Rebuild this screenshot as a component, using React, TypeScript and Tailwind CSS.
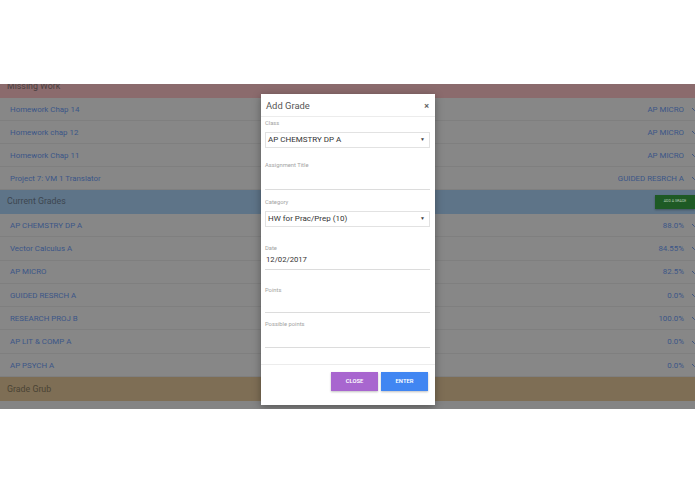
import React from "react";

const font = { fontFamily: "Roboto, 'Liberation Sans', sans-serif" };

const missing = [
  ["Homework Chap 14", "AP MICRO"],
  ["Homework chap 12", "AP MICRO"],
  ["Homework Chap 11", "AP MICRO"],
  ["Project 7: VM 1 Translator", "GUIDED RESRCH A"],
];

const grades = [
  ["AP CHEMSTRY DP A", "88.0%"],
  ["Vector Calculus A", "84.55%"],
  ["AP MICRO", "82.5%"],
  ["GUIDED RESRCH A", "0.0%"],
  ["RESEARCH PROJ B", "100.0%"],
  ["AP LIT & COMP A", "0.0%"],
  ["AP PSYCH A", "0.0%"],
];

function Chevron() {
  return (
    <svg width="7" height="5" viewBox="0 0 7 5" className="-mr-[3px] shrink-0">
      <path d="M1 1l2.5 2.5L6 1" fill="none" stroke="#3f5680" strokeWidth="1" />
    </svg>
  );
}

function Row({ left, right, h }: { left: string; right: string; h: string }) {
  return (
    <div className={`flex items-center justify-between border-b border-[#7f7f7f] bg-[#878787] pl-[10px] pr-0 ${h}`}>
      <span className="pt-[1px] text-[7.9px] text-[#3b5688]">{left}</span>
      <span className="flex items-center gap-[7px] pt-[1px] text-[7.9px] text-[#3b5688]">
        {right}
        <Chevron />
      </span>
    </div>
  );
}

function Field({ label, value, h }: { label: string; value?: string; h: string }) {
  return (
    <div className={`flex flex-col ${h}`}>
      <span className="text-[5.8px] leading-none text-[#a3a3a3]">{label}</span>
      <div className="flex flex-1 items-center pl-[1px] text-[7.7px] text-[#333]">{value}</div>
      <div className="h-px bg-[#dcdcdc]" />
    </div>
  );
}

function SelectBox({ value }: { value: string }) {
  return (
    <div className="mt-[5px] flex h-[16px] items-center justify-between border border-[#e2e2e2] pl-[2px] pr-[4px] text-[8px] text-[#333]">
      <span>{value}</span>
      <span className="text-[5px] text-[#444]">▼</span>
    </div>
  );
}

export default function App() {
  return (
    <div className="h-[494px] w-[695px] overflow-hidden bg-white" style={font}>
      <div className="h-[84px]" />
      <div className="relative h-[325px] overflow-hidden bg-[#848484]">
        <div className="-mt-[10px]">
          <div className="flex h-[24px] items-center bg-[#8b6b6d] pl-[7px] pt-[2px] text-[8.8px] text-[#4a4040]">
            Missing Work
          </div>
          {missing.map(([l, r]) => (
            <Row key={l} left={l} right={r} h="h-[23px]" />
          ))}
          <div className="flex h-[24px] items-center justify-between bg-[#5e7488] pl-[7px] text-[8.8px] text-[#3d4650]">
            <span>Current Grades</span>
            <span className="flex h-[14px] w-[40px] items-center justify-center bg-[#1e5a25] text-[3.6px] text-[#b3c9b4] shadow-[0_1px_2px_rgba(0,0,0,0.3)]">
              ADD A GRADE
            </span>
          </div>
          {grades.map(([l, r]) => (
            <Row key={l} left={l} right={r} h="h-[23.3px]" />
          ))}
          <div className="flex h-[24px] items-center bg-[#7e6e55] pl-[7px] pt-[1px] text-[8.8px] text-[#4a4334]">
            Grade Grub
          </div>
        </div>

        <div className="absolute left-[261px] top-[10px] flex h-[311px] w-[174px] flex-col bg-white shadow-[0_2px_8px_rgba(0,0,0,0.35)]">
          <div className="flex h-[23px] items-center justify-between border-b border-[#ececec] pl-[5px] pr-[6px] pt-[2px]">
            <span className="text-[9.4px] text-[#555]">Add Grade</span>
            <span className="text-[9px] font-bold leading-none text-[#666]">×</span>
          </div>
          <div className="flex flex-col pl-[4px] pr-[5px] pt-[4px]">
            <span className="text-[5.8px] leading-none text-[#a3a3a3]">Class</span>
            <SelectBox value="AP CHEMSTRY DP A" />
            <div className="h-[15px]" />
            <Field label="Assignment Title" h="h-[27px]" />
            <div className="h-[10px]" />
            <span className="text-[5.8px] leading-none text-[#a3a3a3]">Category</span>
            <SelectBox value="HW for Prac/Prep (10)" />
            <div className="h-[19px]" />
            <Field label="Date" value="12/02/2017" h="h-[24px]" />
            <div className="h-[18px]" />
            <Field label="Points" h="h-[25px]" />
            <div className="h-[9px]" />
            <Field label="Possible points" h="h-[26px]" />
          </div>
          <div className="mt-[16px] border-t border-[#ececec]" />
          <div className="flex justify-end gap-[3px] pr-[7px] pt-[7px]">
            <button className="flex h-[19px] w-[47px] items-center justify-center bg-[#a866cf] text-[5.8px] font-semibold text-white shadow-[0_1px_2px_rgba(0,0,0,0.25)]">
              CLOSE
            </button>
            <button className="flex h-[19px] w-[47px] items-center justify-center bg-[#4186f2] text-[5.8px] font-semibold text-white shadow-[0_1px_2px_rgba(0,0,0,0.25)]">
              ENTER
            </button>
          </div>
        </div>
      </div>
    </div>
  );
}
